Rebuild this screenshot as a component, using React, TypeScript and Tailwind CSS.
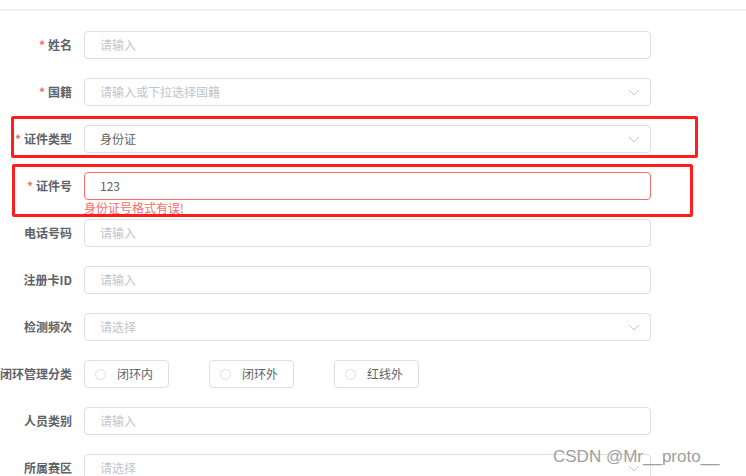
import React from "react";

const font = { fontFamily: '"Noto Sans CJK SC", "Noto Sans", sans-serif' };

function Chevron() {
  return (
    <svg width="12" height="7" viewBox="0 0 12 7" className="shrink-0">
      <path d="M1 1 L6 6 L11 1" fill="none" stroke="#c0c4cc" strokeWidth="1" />
    </svg>
  );
}

function Label({ text, required }: { text: string; required?: boolean }) {
  return (
    <div className="flex h-[28px] w-[84px] shrink-0 items-center justify-end whitespace-nowrap pr-3 text-xs font-semibold text-[#606266]">
      {required && <span className="mr-[3px] text-[#f56c6c]">*</span>}
      {text}
    </div>
  );
}

function Field({
  label,
  required,
  placeholder,
  value,
  select,
  error,
}: {
  label: string;
  required?: boolean;
  placeholder?: string;
  value?: string;
  select?: boolean;
  error?: string;
}) {
  return (
    <div className={error ? "flex items-start" : "mb-[19px] flex items-start"}>
      <Label text={label} required={required} />
      <div className="flex-1">
        <div
          className={
            "flex h-[28px] items-center rounded-[4px] border bg-white pl-[15px] pr-[10px] text-xs " +
            (error ? "border-[#f56c6c]" : "border-[#dcdfe6]")
          }
        >
          <span className={value ? "flex-1 text-[#606266]" : "flex-1 text-[#c0c4cc]"}>
            {value ?? placeholder}
          </span>
          {select && <Chevron />}
        </div>
        {error && (
          <div className="h-[19px] pt-[1px] text-xs leading-[14px] text-[#f56c6c]">{error}</div>
        )}
      </div>
    </div>
  );
}

function Radio({ text }: { text: string }) {
  return (
    <div className="flex h-[28px] w-[85px] items-center rounded-[4px] border border-[#dcdfe6] pl-[10px] text-xs text-[#606266]">
      <span className="h-[11px] w-[11px] rounded-full border border-[#dcdfe6]" />
      <span className="ml-[11px]">{text}</span>
    </div>
  );
}

export default function App() {
  return (
    <div className="relative h-[476px] w-[746px] overflow-hidden bg-white" style={font}>
      <div className="mt-[9px] h-[2px] bg-[#efefef]" />
      <div className="w-[651px] pt-[20px]">
        <Field label="姓名" required placeholder="请输入" />
        <Field label="国籍" required placeholder="请输入或下拉选择国籍" select />
        <Field label="证件类型" required value="身份证" select />
        <Field label="证件号" required value="123" error="身份证号格式有误!" />
        <Field label="电话号码" placeholder="请输入" />
        <Field label="注册卡ID" placeholder="请输入" />
        <Field label="检测频次" placeholder="请选择" select />
        <div className="mb-[19px] flex">
          <Label text="闭环管理分类" />
          <div className="flex gap-[40px]">
            <Radio text="闭环内" />
            <Radio text="闭环外" />
            <Radio text="红线外" />
          </div>
        </div>
        <Field label="人员类别" placeholder="请输入" />
        <Field label="所属赛区" placeholder="请选择" select />
      </div>

      {/* annotation boxes */}
      <div className="absolute left-[11px] top-[116px] h-[42px] w-[687px] rounded-[2px] border-[3px] border-[#ff1e1e]" />
      <div className="absolute left-[12px] top-[164px] h-[53px] w-[681px] rounded-[2px] border-[3px] border-[#ff1e1e]" />

      <div
        className="absolute left-[553px] top-[445px] text-[17px] leading-[24px] text-[#9e9e9e]"
        style={{ fontFamily: '"Liberation Sans", Arial, sans-serif' }}
      >
        CSDN @Mr__proto__
      </div>
    </div>
  );
}
